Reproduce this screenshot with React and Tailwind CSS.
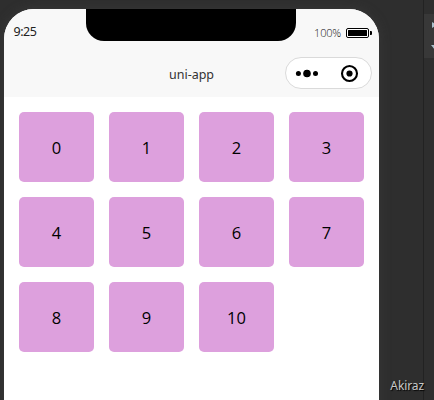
function StatusBar() {
  return (
    <div className="relative flex h-8 items-start justify-between">
      <span className="ml-[9.5px] mt-[15px] text-[12.5px] leading-4 tracking-[-0.5px] text-[#222]">9:25</span>
      <div className="absolute left-[82px] top-0 h-8 w-[210px] rounded-b-[18px] bg-black" />
      <div className="mr-[7px] mt-4 flex items-center">
        <span className="mr-[5px] font-['Open_Sans','Noto_Sans',sans-serif] text-[11px] font-light leading-4 tracking-[-0.2px] text-[#111]">100%</span>
        <svg className="h-[10px] w-[26px]" viewBox="0 0 26 10">
          <rect x="0.5" y="0.5" width="22" height="9" rx="1.5" fill="#fff" stroke="#000" />
          <rect x="2" y="2" width="19" height="6" rx="0.5" />
          <path d="M24 3h1q1 0 1 1v2q0 1-1 1h-1z" />
        </svg>
      </div>
    </div>
  );
}

function Capsule() {
  return (
    <div className="absolute right-[7px] top-4 flex h-8 w-[87px] items-center rounded-full border border-[#dadada] bg-white">
      <svg className="h-[30px] w-[85px]" viewBox="0 0 85 30">
        <circle cx="12.4" cy="15.5" r="2.5" />
        <circle cx="21" cy="15.5" r="3.8" />
        <circle cx="29.5" cy="15.5" r="2.5" />
        <circle cx="63.5" cy="15.5" r="7.5" fill="none" stroke="#000" strokeWidth="2.1" />
        <circle cx="63.5" cy="15.5" r="3.1" />
      </svg>
    </div>
  );
}

function SidePanel() {
  return (
    <aside className="h-[400px] w-[11px] border-l border-[#222] pt-[14px]">
      <div className="h-11 bg-[#383838]">
        <svg className="h-11 w-[10px]" viewBox="0 0 10 44" fill="#a9c0cc">
          <path d="M8 8l5 3-5 3z" />
          <path d="M7 31h8l-4 5z" />
        </svg>
      </div>
    </aside>
  );
}

export default function App() {
  return (
    <div className="relative flex h-[400px] w-[434px] justify-between overflow-hidden bg-[#2e2e2e] font-['Noto_Sans','Open_Sans',sans-serif]">
      <main className="ml-1 mt-[9px] h-[430px] w-[375px] shrink-0 overflow-hidden rounded-t-[30px] bg-white shadow-[0_0_12px_rgba(70,70,70,0.45)]">
        <header className="h-[88px] bg-[#f8f8f8]">
          <StatusBar />
          <div className="relative h-14">
            <h1 className="pt-[25px] text-center text-[12.5px] leading-[18px] text-[#333]">uni-app</h1>
            <Capsule />
          </div>
        </header>
        <section className="grid grid-cols-[repeat(4,75px)] gap-[15px] p-[15px]">
          {Array.from({ length: 11 }, (_, n) => (
            <div key={n} className="flex h-[70px] items-center justify-center rounded-[5px] bg-[#dda0dd] pt-[2px] font-['Open_Sans','Noto_Sans',sans-serif] text-[16.5px] text-black">
              {n}
            </div>
          ))}
        </section>
      </main>
      <SidePanel />
      <span className="absolute right-[10px] top-[377px] text-[12px] leading-[18px] tracking-[-0.1px] text-[#c8c8c8] [text-shadow:1px_1px_1px_#000]">Akiraz</span>
    </div>
  );
}
